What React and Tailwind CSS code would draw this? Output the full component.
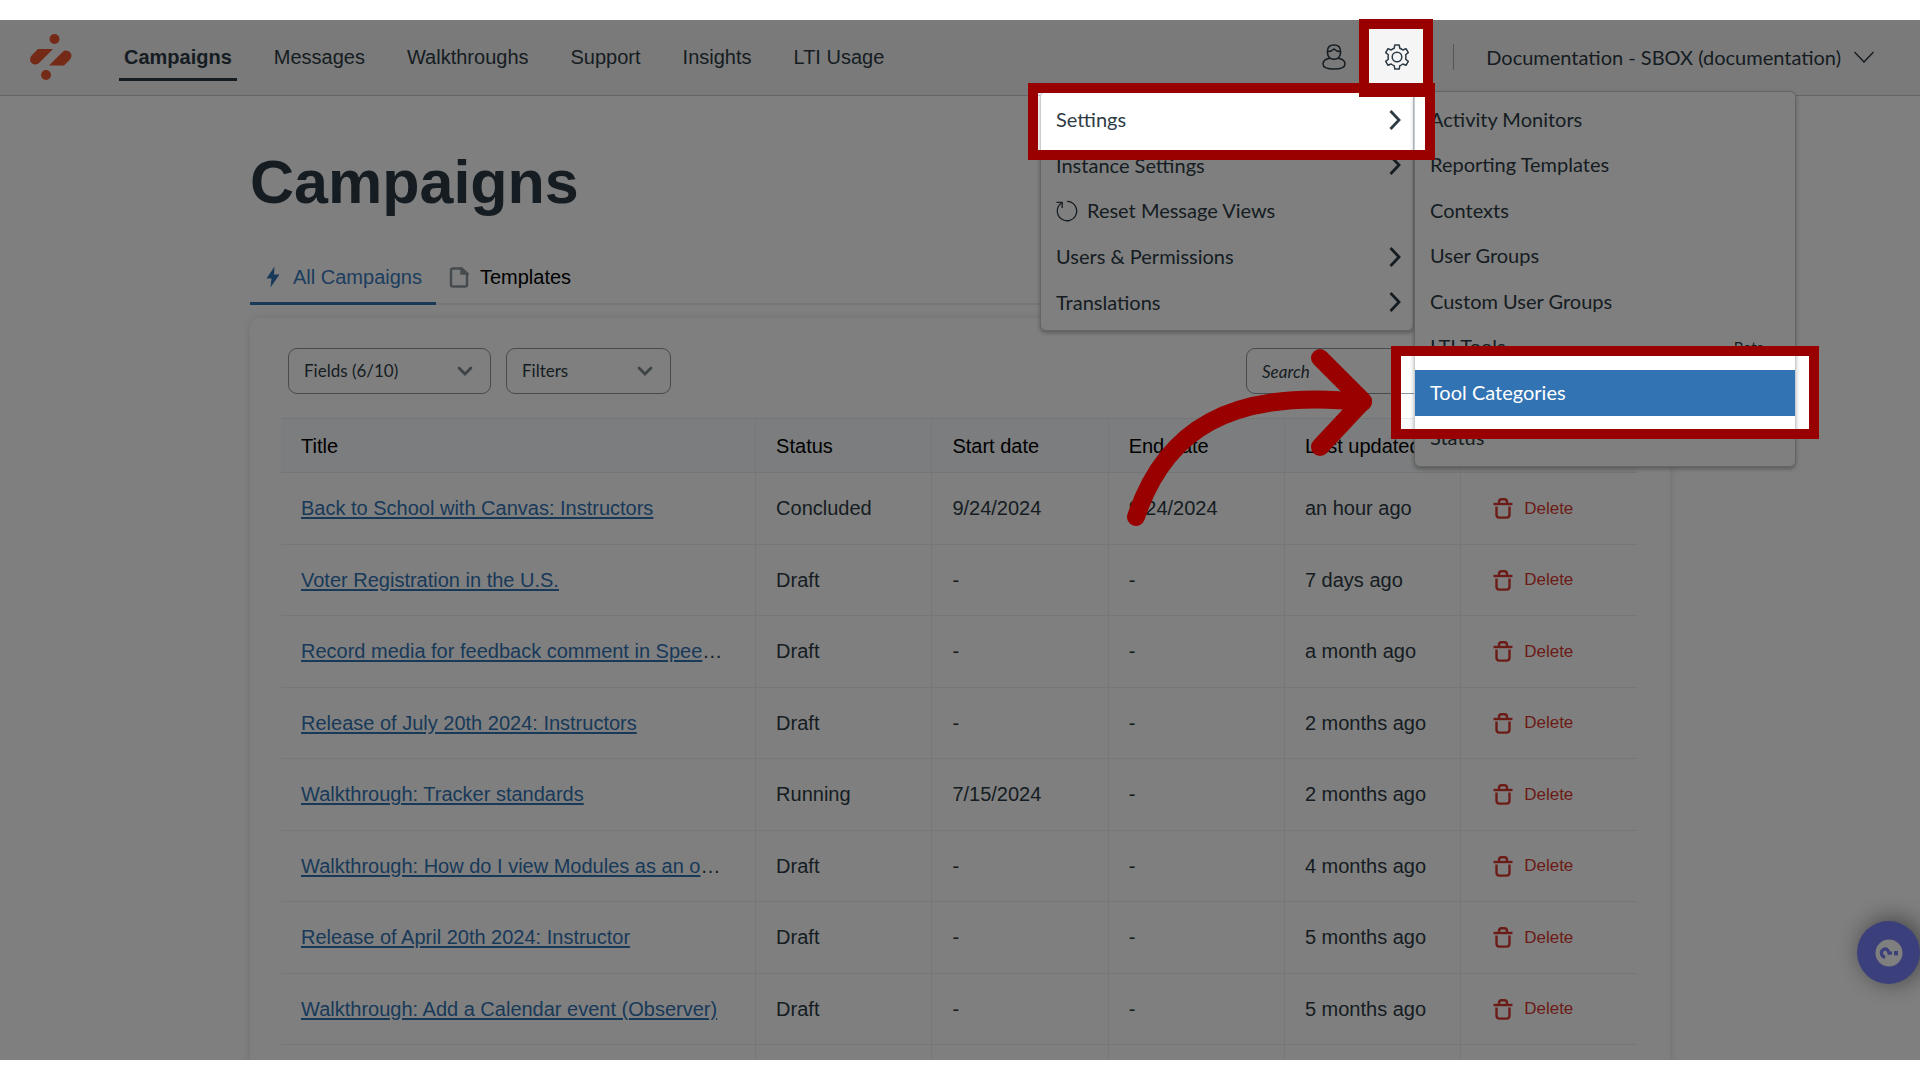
import React from "react";

const navItems = ["Campaigns", "Messages", "Walkthroughs", "Support", "Insights", "LTI Usage"];

const columns = ["Title", "Status", "Start date", "End date", "Last updated", "Actions"];

const campaigns = [
  ["Back to School with Canvas: Instructors", "Concluded", "9/24/2024", "9/24/2024", "an hour ago"],
  ["Voter Registration in the U.S.", "Draft", "-", "-", "7 days ago"],
  ["Record media for feedback comment in Spee…", "Draft", "-", "-", "a month ago"],
  ["Release of July 20th 2024: Instructors", "Draft", "-", "-", "2 months ago"],
  ["Walkthrough: Tracker standards", "Running", "7/15/2024", "-", "2 months ago"],
  ["Walkthrough: How do I view Modules as an o…", "Draft", "-", "-", "4 months ago"],
  ["Release of April 20th 2024: Instructor", "Draft", "-", "-", "5 months ago"],
  ["Walkthrough: Add a Calendar event (Observer)", "Draft", "-", "-", "5 months ago"],
];

const settingsMenu = [
  { label: "Settings", sub: true },
  { label: "Instance Settings", sub: true },
  { label: "Reset Message Views", icon: true },
  { label: "Users & Permissions", sub: true },
  { label: "Translations", sub: true },
];

const subMenu = [
  { label: "Activity Monitors" },
  { label: "Reporting Templates" },
  { label: "Contexts" },
  { label: "User Groups" },
  { label: "Custom User Groups" },
  { label: "LTI Tools", badge: "Beta" },
  { label: "Tool Categories", active: true },
  { label: "Status" },
];

function Logo() {
  return (
    <svg width="42" height="46" viewBox="0 0 42 46" fill="#ea5530" aria-hidden="true">
      <circle cx="24.5" cy="5" r="5" />
      <circle cx="16" cy="41" r="5" />
      <path d="M8 15H23L9.500 28.500A5.400 5.400 0 0 1 0 25.500Q0 23 2 21Z" />
      <path d="M34 31.500H19L32.500 18A5.400 5.400 0 0 1 41.500 21.500Q41.500 24 39.500 26Z" />
    </svg>
  );
}

function UserIcon() {
  return (
    <svg width="24" height="26" viewBox="0 0 24 26" fill="none" stroke="#2d3b45" strokeWidth="1.5" aria-hidden="true">
      <path d="M7.800 14.200C6 12.500 5.400 10 5.400 7.500C5.400 3.500 8 1 12 1S18.600 3.500 18.600 7.500C18.600 10 18 12.500 16.200 14.200" />
      <path d="M5.600 7.500C8 7.500 10.500 6.600 12 5C13.500 6.600 16 7.500 18.400 7.500" />
      <path d="M7.800 14.200C4 14.800 1 16.500 1 20C1 23.500 4 25 12 25S23 23.500 23 20C23 16.500 20 14.800 16.200 14.200C13.500 15.600 10.500 15.600 7.800 14.200Z" />
    </svg>
  );
}

function GearIcon() {
  return (
    <svg width="26" height="26" viewBox="0 0 26 26" fill="none" stroke="#2d3b45" strokeWidth="1.5" strokeLinejoin="round" aria-hidden="true">
      <path d="M10.800 1H15.200L15.800 4.300Q17.500 4.900 18.800 6L22 4.700L24.300 8.600L21.700 10.800Q22.100 13 21.700 15.200L24.300 17.400L22 21.300L18.800 20Q17.500 21.100 15.800 21.700L15.200 25H10.800L10.200 21.700Q8.500 21.100 7.200 20L4 21.300L1.700 17.400L4.300 15.200Q3.900 13 4.300 10.800L1.700 8.600L4 4.700L7.200 6Q8.500 4.900 10.200 4.300Z" />
      <circle cx="13" cy="13" r="4.800" />
    </svg>
  );
}

function ChevronRight() {
  return (
    <svg width="12" height="20" viewBox="0 0 12 20" fill="none" stroke="#2d3b45" strokeWidth="2.800" aria-hidden="true">
      <path d="M1.500 1L10 10L1.500 19" />
    </svg>
  );
}

function ResetIcon() {
  return (
    <svg width="22" height="22" viewBox="0 0 22 22" fill="none" stroke="#2d3b45" strokeWidth="1.300" aria-hidden="true">
      <path d="M11 1.300A9.700 9.700 0 1 1 5.500 3" />
      <path d="M0.500 2.400H6.200V8" />
    </svg>
  );
}

function TrashIcon() {
  return (
    <svg width="20" height="22" viewBox="0 0 20 22" fill="none" stroke="#d8392f" strokeWidth="2.400" aria-hidden="true">
      <path d="M0.500 7H19.500" />
      <path d="M6 7V5Q6 2.200 8.500 2.200H11.500Q14 2.200 14 5V7" />
      <path d="M3.500 9.500V17.500Q3.500 20.600 6.500 20.600H13.500Q16.500 20.600 16.500 17.500V9.500" />
    </svg>
  );
}

function Dropdown({ id, label, className }) {
  return (
    <div className={"relative " + className}>
      <select id={id} aria-label={label} className="h-[46px] w-full appearance-none rounded-[9px] border border-[#8b969e] bg-white pl-[15px] pr-10 font-[Lato,sans-serif] text-[17px] text-[#2d3b45]">
        <option>{label}</option>
      </select>
      <svg className="pointer-events-none absolute right-[18px] top-[18px]" width="16" height="10" viewBox="0 0 16 10" fill="none" stroke="#7b868e" strokeWidth="2.800" strokeLinecap="round" aria-hidden="true">
        <path d="M2 2L8 8L14 2" />
      </svg>
    </div>
  );
}

function Header() {
  return (
    <header className="flex h-[76px] items-center border-b border-[#c7cdd1] bg-[#f5f5f5] pb-[2px] pl-[30px] pr-[46px]">
      <a href="#home" aria-label="Home"><Logo /></a>
      <nav className="ml-[47px] flex gap-8 text-[20px] leading-6 text-[#2d3b45]">
        {navItems.map((item, i) => (
          <a key={item} href={"#" + item} className={i === 0 ? "border-b-[3px] border-[#2d3b45] px-[5px] pb-[9px] pt-3 font-bold" : "border-b-[3px] border-transparent px-[5px] pb-[9px] pt-3"}>
            {item}
          </a>
        ))}
      </nav>
      <div className="ml-auto flex items-center font-[Lato,sans-serif] text-[20px] text-[#2d3b45]">
        <button aria-label="Account"><UserIcon /></button>
        <button aria-label="Settings" className="ml-[38px]"><GearIcon /></button>
        <span className="ml-[43px] h-[26px] w-px bg-[#a5afb5]" />
        <button className="ml-8 flex items-center gap-[13px]">
          Documentation - SBOX (documentation)
          <svg width="20" height="12" viewBox="0 0 20 12" fill="none" stroke="#2d3b45" strokeWidth="1.500" aria-hidden="true">
            <path d="M0.500 1L10 11L19.500 1" />
          </svg>
        </button>
      </div>
    </header>
  );
}

function TitleLink({ title }) {
  const clipped = title.endsWith("…");
  return (
    <>
      <a href="#campaign" className="text-[#3273b3] underline underline-offset-2">{clipped ? title.slice(0, -1) : title}</a>
      {clipped && "…"}
    </>
  );
}

function CampaignTable() {
  return (
    <table className="h-[698px] w-full table-fixed border-collapse text-left text-[20px] text-[#2d3b45]">
      <colgroup>
        <col className="w-[35%]" />
        <col className="w-[13%]" />
        <col className="w-[13%]" />
        <col className="w-[13%]" />
        <col className="w-[13%]" />
        <col className="w-[13%]" />
      </colgroup>
      <thead>
        <tr className="h-[54px] border-y border-[#e8eaec] bg-[#f9fafc] text-black">
          {columns.map((c) => (
            <th key={c} className="border-r border-[#eef0f2] px-5 font-normal last:border-r-0">{c}</th>
          ))}
        </tr>
      </thead>
      <tbody>
        {campaigns.map((row) => (
          <tr key={row[0]} className="h-[71px] border-b border-[#eeeeee]">
            {row.map((cell, i) => (
              <td key={i} className="whitespace-nowrap border-r border-[#eeeeee] px-5">
                {i === 0 ? <TitleLink title={cell} /> : cell}
              </td>
            ))}
            <td className="pl-8">
              <button className="flex items-center gap-[11px] text-[17px] text-[#d8392f]"><TrashIcon />Delete</button>
            </td>
          </tr>
        ))}
        <tr className="h-[71px]">
          {columns.map((c) => (
            <td key={c} className="border-r border-[#eeeeee] last:border-r-0" />
          ))}
        </tr>
      </tbody>
    </table>
  );
}

function Menus() {
  const shell = "rounded-md border border-[#c7cdd1] bg-white py-[5px] shadow-[0_2px_4px_rgba(0,0,0,0.3)]";
  return (
    <div className="absolute right-[124px] top-[71px] flex items-start font-[Lato,sans-serif] text-[20px] leading-6 text-[#2d3b45]">
      <div role="menu" className={"w-[374px] " + shell}>
        <div className="grid h-[228px] grid-rows-5">
          {settingsMenu.map((m) => (
            <button key={m.label} role="menuitem" className="flex items-center gap-[9px] pl-[15px] pr-3 text-left">
              {m.icon && <ResetIcon />}
              <span className="flex-1 pb-px">{m.label}</span>
              {m.sub && <ChevronRight />}
            </button>
          ))}
        </div>
      </div>
      <div role="menu" className={"w-[382px] " + shell}>
        <div className="grid h-[364px] grid-rows-8">
          {subMenu.map((m) => (
            <button key={m.label} role="menuitem" className={m.active ? "flex items-center bg-[#3273b3] px-[15px] text-left text-white" : "flex items-center px-[15px] text-left"}>
              <span className="flex-1 pb-[2px]">{m.label}</span>
              {m.badge && <span className="pr-4 text-[15px]">{m.badge}</span>}
            </button>
          ))}
        </div>
      </div>
    </div>
  );
}

export default function App() {
  return (
    <div className="flex h-screen flex-col bg-white py-5 font-['Liberation_Sans',Arial,sans-serif]">
      <div className="relative min-h-0 flex-1">
        <div className="h-full overflow-hidden">
          <Header />
          <main className="mx-auto w-full max-w-[1420px]">
            <h1 className="pt-[52px] text-[61px] font-bold leading-[68px] text-[#2d3b45]">Campaigns</h1>
            <div role="tablist" className="mt-[34px] flex h-[55px] border-b-2 border-[#eeeeee] text-[20px]">
              <button role="tab" aria-selected="true" className="-mb-[2px] flex items-center gap-[13px] border-b-[3px] border-[#3273b3] pl-4 pr-[14px] pt-[2px] text-[#3a7abc]">
                <svg width="14" height="22" viewBox="0 0 14 22" fill="#3273b3" aria-hidden="true">
                  <path d="M8.500 0.500L0.500 12.500H5.500L4.500 21.500L13.500 8.500H8Z" />
                </svg>
                All Campaigns
              </button>
              <button role="tab" aria-selected="false" className="flex items-center gap-[11px] px-[13px] pt-px text-black">
                <svg width="20" height="21" viewBox="0 0 20 21" fill="none" stroke="#8b969e" strokeWidth="2.500" aria-hidden="true">
                  <path d="M4 1.500H12.500L18 6.500V18Q18 19.500 16 19.500H4Q2 19.500 2 18V3Q2 1.500 4 1.500Z" />
                  <path d="M12.500 1.500V6.500H18Z" fill="#8b969e" />
                </svg>
                Templates
              </button>
            </div>
            <section className="mt-[13px] h-[900px] rounded-[10px] bg-white pl-[31px] pr-[33px] pt-[30px] shadow-[0_0_10px_rgba(0,0,0,0.12)]">
              <div className="flex gap-[15px] px-[7px] pb-6">
                <Dropdown id="fields" label="Fields (6/10)" className="w-[203px]" />
                <Dropdown id="filters" label="Filters" className="w-[165px]" />
                <input type="search" aria-label="Search" placeholder="Search" className="ml-auto h-[46px] w-[384px] rounded-[9px] border border-[#8b969e] px-[15px] font-[Lato,sans-serif] text-[17px] placeholder:italic placeholder:text-[#2d3b45]" />
              </div>
              <CampaignTable />
            </section>
          </main>
        </div>

        <Menus />

        <button aria-label="Help" className="absolute bottom-[76px] right-0 flex size-[63px] items-center justify-center rounded-full bg-[#767ef6] shadow-[4px_-2px_24px_rgba(0,0,0,0.5)]">
          <svg width="28" height="28" viewBox="0 0 28 28" fill="none" aria-hidden="true">
            <circle cx="14" cy="14" r="13.500" fill="white" />
            <path d="M10 18.500C6 17 5 12.500 8.500 10.500C12 8.700 13.500 12 14 14.200H17" stroke="#767ef6" strokeWidth="3.200" />
            <rect x="19" y="12" width="4" height="4.400" fill="#767ef6" />
          </svg>
        </button>

        {/* Dimmed backdrop with three spotlight openings */}
        <div className="pointer-events-none absolute inset-0 bg-black/50 [clip-path:polygon(evenodd,0_0,100%_0,100%_100%,0_100%,0_0,calc(100%-551px)_9px,calc(100%-496px)_9px,calc(100%-496px)_66px,calc(100%-551px)_66px,calc(100%-551px)_9px,0_0,calc(100%-882px)_73px,calc(100%-495px)_73px,calc(100%-495px)_130px,calc(100%-882px)_130px,calc(100%-882px)_73px,0_0,calc(100%-519px)_336px,calc(100%-111px)_336px,calc(100%-111px)_409px,calc(100%-519px)_409px,calc(100%-519px)_336px,0_0)]" />

        <div className="pointer-events-none absolute -top-px right-[487px] h-[78px] w-[74px] border-[10px] border-[#990000]" />
        <div className="pointer-events-none absolute right-[485px] top-[63px] h-[77px] w-[407px] border-[10px] border-[#990000]" />
        <div className="pointer-events-none absolute right-[101px] top-[326px] h-[93px] w-[428px] border-[10px] border-[#990000]" />
        <svg className="pointer-events-none absolute right-[540px] top-[320px]" width="260" height="200" viewBox="1120 340 260 200" fill="none" stroke="#990000" strokeWidth="18" strokeLinecap="round" strokeLinejoin="round" aria-hidden="true">
          <path d="M1136 517C1165 430 1230 388 1363 402" />
          <path d="M1320 358L1363 401L1320 447" />
        </svg>
      </div>
    </div>
  );
}
